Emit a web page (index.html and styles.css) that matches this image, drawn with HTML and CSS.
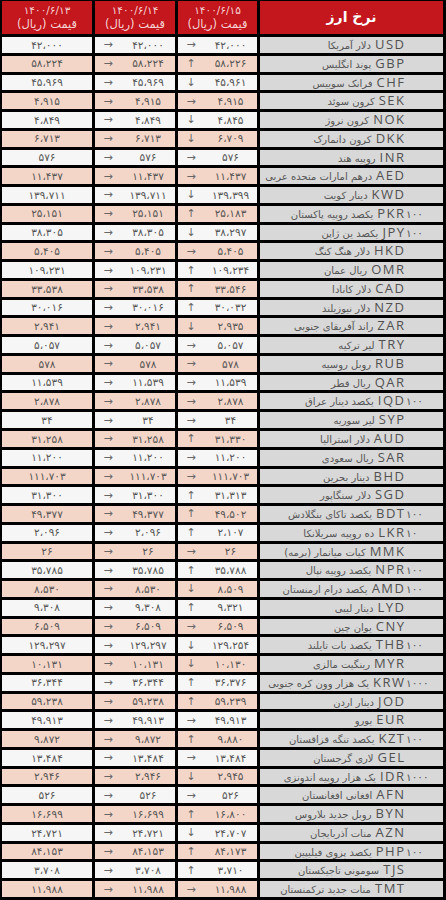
FILE: index.html
```html
<!DOCTYPE html>
<html lang="fa">
<head>
<meta charset="utf-8">
<title>نرخ ارز</title>
<link rel="stylesheet" href="styles.css">
</head>
<body>
<div class="sheet">
  <div class="hd"><span class="hd-date">۱۴۰۰/۶/۱۳</span><span class="hd-unit">قیمت (ریال)</span></div>
  <div class="hd"><span class="hd-date">۱۴۰۰/۶/۱۴</span><span class="hd-unit">قیمت (ریال)</span></div>
  <div class="hd"><span class="hd-date">۱۴۰۰/۶/۱۵</span><span class="hd-unit">قیمت (ریال)</span></div>
  <div class="hd hd-title">نرخ ارز</div>

  <div class="row"><div class="c num">۴۲،۰۰۰</div><div class="c ar"><span class="arr">→</span><span class="val">۴۲،۰۰۰</span></div><div class="c ar"><span class="arr">→</span><span class="val">۴۲،۰۰۰</span></div><div class="c nm"><span class="fa">دلار آمریکا</span><span class="code">USD</span><span class="mult"></span></div></div>
  <div class="row"><div class="c num">۵۸،۲۲۴</div><div class="c ar"><span class="arr">→</span><span class="val">۵۸،۲۲۴</span></div><div class="c ar"><span class="arr">↑</span><span class="val">۵۸،۲۲۶</span></div><div class="c nm"><span class="fa">پوند انگلیس</span><span class="code">GBP</span><span class="mult"></span></div></div>
  <div class="row"><div class="c num">۴۵،۹۶۹</div><div class="c ar"><span class="arr">→</span><span class="val">۴۵،۹۶۹</span></div><div class="c ar"><span class="arr">↓</span><span class="val">۴۵،۹۶۱</span></div><div class="c nm"><span class="fa">فرانک سوییس</span><span class="code">CHF</span><span class="mult"></span></div></div>
  <div class="row"><div class="c num">۴،۹۱۵</div><div class="c ar"><span class="arr">→</span><span class="val">۴،۹۱۵</span></div><div class="c ar"><span class="arr">→</span><span class="val">۴،۹۱۵</span></div><div class="c nm"><span class="fa">کرون سوئد</span><span class="code">SEK</span><span class="mult"></span></div></div>
  <div class="row"><div class="c num">۴،۸۴۹</div><div class="c ar"><span class="arr">→</span><span class="val">۴،۸۴۹</span></div><div class="c ar"><span class="arr">↓</span><span class="val">۴،۸۴۵</span></div><div class="c nm"><span class="fa">کرون نروژ</span><span class="code">NOK</span><span class="mult"></span></div></div>
  <div class="row"><div class="c num">۶،۷۱۳</div><div class="c ar"><span class="arr">→</span><span class="val">۶،۷۱۳</span></div><div class="c ar"><span class="arr">↓</span><span class="val">۶،۷۰۹</span></div><div class="c nm"><span class="fa">کرون دانمارک</span><span class="code">DKK</span><span class="mult"></span></div></div>
  <div class="row"><div class="c num">۵۷۶</div><div class="c ar"><span class="arr">→</span><span class="val">۵۷۶</span></div><div class="c ar"><span class="arr">→</span><span class="val">۵۷۶</span></div><div class="c nm"><span class="fa">روپیه هند</span><span class="code">INR</span><span class="mult"></span></div></div>
  <div class="row"><div class="c num">۱۱،۴۳۷</div><div class="c ar"><span class="arr">→</span><span class="val">۱۱،۴۳۷</span></div><div class="c ar"><span class="arr">→</span><span class="val">۱۱،۴۳۷</span></div><div class="c nm"><span class="fa">درهم امارات متحده عربی</span><span class="code">AED</span><span class="mult"></span></div></div>
  <div class="row"><div class="c num">۱۳۹،۷۱۱</div><div class="c ar"><span class="arr">→</span><span class="val">۱۳۹،۷۱۱</span></div><div class="c ar"><span class="arr">↓</span><span class="val">۱۳۹،۳۹۹</span></div><div class="c nm"><span class="fa">دینار کویت</span><span class="code">KWD</span><span class="mult"></span></div></div>
  <div class="row"><div class="c num">۲۵،۱۵۱</div><div class="c ar"><span class="arr">→</span><span class="val">۲۵،۱۵۱</span></div><div class="c ar"><span class="arr">↑</span><span class="val">۲۵،۱۸۳</span></div><div class="c nm"><span class="fa">یکصد روپیه پاکستان</span><span class="code">PKR</span><span class="mult">۱۰۰</span></div></div>
  <div class="row"><div class="c num">۳۸،۳۰۵</div><div class="c ar"><span class="arr">→</span><span class="val">۳۸،۳۰۵</span></div><div class="c ar"><span class="arr">↓</span><span class="val">۳۸،۲۹۷</span></div><div class="c nm"><span class="fa">یکصد ین ژاپن</span><span class="code">JPY</span><span class="mult">۱۰۰</span></div></div>
  <div class="row"><div class="c num">۵،۴۰۵</div><div class="c ar"><span class="arr">→</span><span class="val">۵،۴۰۵</span></div><div class="c ar"><span class="arr">→</span><span class="val">۵،۴۰۵</span></div><div class="c nm"><span class="fa">دلار هنگ کنگ</span><span class="code">HKD</span><span class="mult"></span></div></div>
  <div class="row"><div class="c num">۱۰۹،۲۳۱</div><div class="c ar"><span class="arr">→</span><span class="val">۱۰۹،۲۳۱</span></div><div class="c ar"><span class="arr">↑</span><span class="val">۱۰۹،۲۳۴</span></div><div class="c nm"><span class="fa">ریال عمان</span><span class="code">OMR</span><span class="mult"></span></div></div>
  <div class="row"><div class="c num">۳۳،۵۳۸</div><div class="c ar"><span class="arr">→</span><span class="val">۳۳،۵۳۸</span></div><div class="c ar"><span class="arr">↑</span><span class="val">۳۳،۵۴۶</span></div><div class="c nm"><span class="fa">دلار کانادا</span><span class="code">CAD</span><span class="mult"></span></div></div>
  <div class="row"><div class="c num">۳۰،۰۱۶</div><div class="c ar"><span class="arr">→</span><span class="val">۳۰،۰۱۶</span></div><div class="c ar"><span class="arr">↑</span><span class="val">۳۰،۰۳۲</span></div><div class="c nm"><span class="fa">دلار نیوزیلند</span><span class="code">NZD</span><span class="mult"></span></div></div>
  <div class="row"><div class="c num">۲،۹۴۱</div><div class="c ar"><span class="arr">→</span><span class="val">۲،۹۴۱</span></div><div class="c ar"><span class="arr">↓</span><span class="val">۲،۹۳۵</span></div><div class="c nm"><span class="fa">راند آفریقای جنوبی</span><span class="code">ZAR</span><span class="mult"></span></div></div>
  <div class="row"><div class="c num">۵،۰۵۷</div><div class="c ar"><span class="arr">→</span><span class="val">۵،۰۵۷</span></div><div class="c ar"><span class="arr">→</span><span class="val">۵،۰۵۷</span></div><div class="c nm"><span class="fa">لیر ترکیه</span><span class="code">TRY</span><span class="mult"></span></div></div>
  <div class="row"><div class="c num">۵۷۸</div><div class="c ar"><span class="arr">→</span><span class="val">۵۷۸</span></div><div class="c ar"><span class="arr">→</span><span class="val">۵۷۸</span></div><div class="c nm"><span class="fa">روبل روسیه</span><span class="code">RUB</span><span class="mult"></span></div></div>
  <div class="row"><div class="c num">۱۱،۵۳۹</div><div class="c ar"><span class="arr">→</span><span class="val">۱۱،۵۳۹</span></div><div class="c ar"><span class="arr">→</span><span class="val">۱۱،۵۳۹</span></div><div class="c nm"><span class="fa">ریال قطر</span><span class="code">QAR</span><span class="mult"></span></div></div>
  <div class="row"><div class="c num">۲،۸۷۸</div><div class="c ar"><span class="arr">→</span><span class="val">۲،۸۷۸</span></div><div class="c ar"><span class="arr">→</span><span class="val">۲،۸۷۸</span></div><div class="c nm"><span class="fa">یکصد دینار عراق</span><span class="code">IQD</span><span class="mult">۱۰۰</span></div></div>
  <div class="row"><div class="c num">۳۴</div><div class="c ar"><span class="arr">→</span><span class="val">۳۴</span></div><div class="c ar"><span class="arr">→</span><span class="val">۳۴</span></div><div class="c nm"><span class="fa">لیر سوریه</span><span class="code">SYP</span><span class="mult"></span></div></div>
  <div class="row"><div class="c num">۳۱،۲۵۸</div><div class="c ar"><span class="arr">→</span><span class="val">۳۱،۲۵۸</span></div><div class="c ar"><span class="arr">↑</span><span class="val">۳۱،۳۳۰</span></div><div class="c nm"><span class="fa">دلار استرالیا</span><span class="code">AUD</span><span class="mult"></span></div></div>
  <div class="row"><div class="c num">۱۱،۲۰۰</div><div class="c ar"><span class="arr">→</span><span class="val">۱۱،۲۰۰</span></div><div class="c ar"><span class="arr">→</span><span class="val">۱۱،۲۰۰</span></div><div class="c nm"><span class="fa">ریال سعودی</span><span class="code">SAR</span><span class="mult"></span></div></div>
  <div class="row"><div class="c num">۱۱۱،۷۰۳</div><div class="c ar"><span class="arr">→</span><span class="val">۱۱۱،۷۰۳</span></div><div class="c ar"><span class="arr">→</span><span class="val">۱۱۱،۷۰۳</span></div><div class="c nm"><span class="fa">دینار بحرین</span><span class="code">BHD</span><span class="mult"></span></div></div>
  <div class="row"><div class="c num">۳۱،۳۰۰</div><div class="c ar"><span class="arr">→</span><span class="val">۳۱،۳۰۰</span></div><div class="c ar"><span class="arr">↑</span><span class="val">۳۱،۳۱۳</span></div><div class="c nm"><span class="fa">دلار سنگاپور</span><span class="code">SGD</span><span class="mult"></span></div></div>
  <div class="row"><div class="c num">۴۹،۳۷۷</div><div class="c ar"><span class="arr">→</span><span class="val">۴۹،۳۷۷</span></div><div class="c ar"><span class="arr">↑</span><span class="val">۴۹،۵۰۲</span></div><div class="c nm"><span class="fa">یکصد تاکای بنگلادش</span><span class="code">BDT</span><span class="mult">۱۰۰</span></div></div>
  <div class="row"><div class="c num">۲،۰۹۶</div><div class="c ar"><span class="arr">→</span><span class="val">۲،۰۹۶</span></div><div class="c ar"><span class="arr">↑</span><span class="val">۲،۱۰۷</span></div><div class="c nm"><span class="fa">ده روپیه سریلانکا</span><span class="code">LKR</span><span class="mult">۱۰</span></div></div>
  <div class="row"><div class="c num">۲۶</div><div class="c ar"><span class="arr">→</span><span class="val">۲۶</span></div><div class="c ar"><span class="arr">→</span><span class="val">۲۶</span></div><div class="c nm"><span class="fa">کیات میانمار (برمه)</span><span class="code">MMK</span><span class="mult"></span></div></div>
  <div class="row"><div class="c num">۳۵،۷۸۵</div><div class="c ar"><span class="arr">→</span><span class="val">۳۵،۷۸۵</span></div><div class="c ar"><span class="arr">↑</span><span class="val">۳۵،۷۸۸</span></div><div class="c nm"><span class="fa">یکصد روپیه نپال</span><span class="code">NPR</span><span class="mult">۱۰۰</span></div></div>
  <div class="row"><div class="c num">۸،۵۳۰</div><div class="c ar"><span class="arr">→</span><span class="val">۸،۵۳۰</span></div><div class="c ar"><span class="arr">↓</span><span class="val">۸،۵۰۹</span></div><div class="c nm"><span class="fa">یکصد درام ارمنستان</span><span class="code">AMD</span><span class="mult">۱۰۰</span></div></div>
  <div class="row"><div class="c num">۹،۳۰۸</div><div class="c ar"><span class="arr">→</span><span class="val">۹،۳۰۸</span></div><div class="c ar"><span class="arr">↑</span><span class="val">۹،۳۲۱</span></div><div class="c nm"><span class="fa">دینار لیبی</span><span class="code">LYD</span><span class="mult"></span></div></div>
  <div class="row"><div class="c num">۶،۵۰۹</div><div class="c ar"><span class="arr">→</span><span class="val">۶،۵۰۹</span></div><div class="c ar"><span class="arr">→</span><span class="val">۶،۵۰۹</span></div><div class="c nm"><span class="fa">یوان چین</span><span class="code">CNY</span><span class="mult"></span></div></div>
  <div class="row"><div class="c num">۱۲۹،۲۹۷</div><div class="c ar"><span class="arr">→</span><span class="val">۱۲۹،۲۹۷</span></div><div class="c ar"><span class="arr">↓</span><span class="val">۱۲۹،۲۵۴</span></div><div class="c nm"><span class="fa">یکصد بات تایلند</span><span class="code">THB</span><span class="mult">۱۰۰</span></div></div>
  <div class="row"><div class="c num">۱۰،۱۳۱</div><div class="c ar"><span class="arr">→</span><span class="val">۱۰،۱۳۱</span></div><div class="c ar"><span class="arr">↓</span><span class="val">۱۰،۱۳۰</span></div><div class="c nm"><span class="fa">رینگیت مالزی</span><span class="code">MYR</span><span class="mult"></span></div></div>
  <div class="row"><div class="c num">۳۶،۳۴۴</div><div class="c ar"><span class="arr">→</span><span class="val">۳۶،۳۴۴</span></div><div class="c ar"><span class="arr">↑</span><span class="val">۳۶،۳۷۶</span></div><div class="c nm"><span class="fa">یک هزار وون کره جنوبی</span><span class="code">KRW</span><span class="mult">۱۰۰۰</span></div></div>
  <div class="row"><div class="c num">۵۹،۲۳۸</div><div class="c ar"><span class="arr">→</span><span class="val">۵۹،۲۳۸</span></div><div class="c ar"><span class="arr">↑</span><span class="val">۵۹،۲۳۹</span></div><div class="c nm"><span class="fa">دینار اردن</span><span class="code">JOD</span><span class="mult"></span></div></div>
  <div class="row"><div class="c num">۴۹،۹۱۳</div><div class="c ar"><span class="arr">→</span><span class="val">۴۹،۹۱۳</span></div><div class="c ar"><span class="arr">→</span><span class="val">۴۹،۹۱۳</span></div><div class="c nm"><span class="fa">یورو</span><span class="code">EUR</span><span class="mult"></span></div></div>
  <div class="row"><div class="c num">۹،۸۷۲</div><div class="c ar"><span class="arr">→</span><span class="val">۹،۸۷۲</span></div><div class="c ar"><span class="arr">↑</span><span class="val">۹،۸۸۰</span></div><div class="c nm"><span class="fa">یکصد تنگه قزاقستان</span><span class="code">KZT</span><span class="mult">۱۰۰</span></div></div>
  <div class="row"><div class="c num">۱۳،۴۸۴</div><div class="c ar"><span class="arr">→</span><span class="val">۱۳،۴۸۴</span></div><div class="c ar"><span class="arr">→</span><span class="val">۱۳،۴۸۴</span></div><div class="c nm"><span class="fa">لاری گرجستان</span><span class="code">GEL</span><span class="mult"></span></div></div>
  <div class="row"><div class="c num">۲،۹۴۶</div><div class="c ar"><span class="arr">→</span><span class="val">۲،۹۴۶</span></div><div class="c ar"><span class="arr">↓</span><span class="val">۲،۹۴۵</span></div><div class="c nm"><span class="fa">یک هزار روپیه اندونزی</span><span class="code">IDR</span><span class="mult">۱۰۰۰</span></div></div>
  <div class="row"><div class="c num">۵۲۶</div><div class="c ar"><span class="arr">→</span><span class="val">۵۲۶</span></div><div class="c ar"><span class="arr">→</span><span class="val">۵۲۶</span></div><div class="c nm"><span class="fa">افغانی افغانستان</span><span class="code">AFN</span><span class="mult"></span></div></div>
  <div class="row"><div class="c num">۱۶،۶۹۹</div><div class="c ar"><span class="arr">→</span><span class="val">۱۶،۶۹۹</span></div><div class="c ar"><span class="arr">↑</span><span class="val">۱۶،۸۰۰</span></div><div class="c nm"><span class="fa">روبل جدید بلاروس</span><span class="code">BYN</span><span class="mult"></span></div></div>
  <div class="row"><div class="c num">۲۴،۷۲۱</div><div class="c ar"><span class="arr">→</span><span class="val">۲۴،۷۲۱</span></div><div class="c ar"><span class="arr">↓</span><span class="val">۲۴،۷۰۷</span></div><div class="c nm"><span class="fa">منات آذربایجان</span><span class="code">AZN</span><span class="mult"></span></div></div>
  <div class="row"><div class="c num">۸۴،۱۵۳</div><div class="c ar"><span class="arr">→</span><span class="val">۸۴،۱۵۳</span></div><div class="c ar"><span class="arr">↑</span><span class="val">۸۴،۱۷۳</span></div><div class="c nm"><span class="fa">یکصد پزوی فیلیپین</span><span class="code">PHP</span><span class="mult">۱۰۰</span></div></div>
  <div class="row"><div class="c num">۳،۷۰۸</div><div class="c ar"><span class="arr">→</span><span class="val">۳،۷۰۸</span></div><div class="c ar"><span class="arr">↑</span><span class="val">۳،۷۱۰</span></div><div class="c nm"><span class="fa">سومونی تاجیکستان</span><span class="code">TJS</span><span class="mult"></span></div></div>
  <div class="row"><div class="c num">۱۱،۹۸۸</div><div class="c ar"><span class="arr">→</span><span class="val">۱۱،۹۸۸</span></div><div class="c ar"><span class="arr">→</span><span class="val">۱۱،۹۸۸</span></div><div class="c nm"><span class="fa">منات جدید ترکمنستان</span><span class="code">TMT</span><span class="mult"></span></div></div>
</div>
</body>
</html>
```

FILE: styles.css
```css
html, body {
  margin: 0;
  padding: 0;
  background: #000;
}

.sheet {
  width: 446px;
  height: 900px;
  box-sizing: border-box;
  padding: 1px 3px 3px 2px;
  display: grid;
  grid-template-columns: 90px 80px 79px 183px;
  grid-template-rows: 33px repeat(46, 1fr);
  gap: 3px;
  font-family: "DejaVu Sans", "Noto Sans", sans-serif;
  color: #555;
  overflow: hidden;
}

.hd {
  background: #c3161d;
  display: flex;
  flex-direction: column;
  align-items: center;
  justify-content: center;
  gap: 1px;
  color: #f6d2d2;
  line-height: 13px;
}

.hd-date {
  font-size: 10.5px;
}

.hd-unit {
  font-size: 11.5px;
}

.hd-title {
  color: #fff;
  font-weight: bold;
  font-size: 14px;
}

.row {
  display: contents;
}

.c {
  min-height: 0;
  display: flex;
  align-items: center;
  font-size: 10.5px;
  line-height: 1;
  background: #f6f6f6;
  white-space: nowrap;
  overflow: hidden;
}

.row:nth-child(even) .c {
  background: #f4d6c8;
}

.row .c.nm {
  background: #d8d8d8;
  justify-content: flex-end;
  align-items: baseline;
  padding-top: 1px;
  padding-right: 37px;
  overflow: visible;
}

.num {
  justify-content: center;
}

.arr {
  width: 26px;
  text-align: center;
  font-size: 11px;
  color: #666;
}

.val {
  flex: 1;
  text-align: center;
}

.fa {
  font-size: 10px;
  color: #555;
  margin-right: 4px;
  direction: rtl;
}

.code {
  font-family: "Open Sans", "Liberation Sans", sans-serif;
  font-size: 13px;
  letter-spacing: 1.5px;
  color: #505050;
  margin-right: -1.5px;
}

.mult {
  width: 0;
  font-size: 10.5px;
  color: #555;
  overflow: visible;
  padding-left: 2px;
}
```
